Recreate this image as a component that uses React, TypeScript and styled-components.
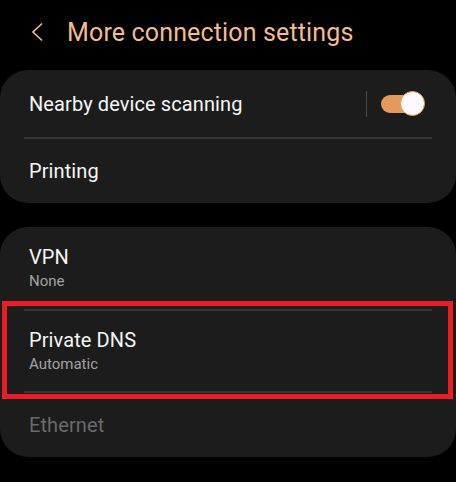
import React from "react";
import styled, { createGlobalStyle } from "styled-components";

const Global = createGlobalStyle`
  html, body { margin: 0; padding: 0; background: #000; }
  body { font-family: Roboto, "Noto Sans", sans-serif; -webkit-font-smoothing: antialiased; }
`;

const Screen = styled.div`
  width: 456px;
  height: 482px;
  background: #000;
  overflow: hidden;
  display: flex;
  flex-direction: column;
`;

const Header = styled.header`
  height: 70px;
  display: flex;
  align-items: center;
  padding-left: 30px;
  box-sizing: border-box;
  padding-bottom: 6px;
`;

const BackButton = styled.span`
  width: 16px;
  height: 20px;
  display: flex;
  margin-right: 21px;
`;

const Title = styled.h1`
  margin: 0;
  font-size: 25px;
  font-weight: 400;
  color: #f3bd8d;
  letter-spacing: 0.15px;
`;

const Card = styled.section`
  position: relative;
  background: #1c1c1c;
  border-radius: 28px;
  display: flex;
  flex-direction: column;
  margin-bottom: 24px;
`;

const Row = styled.div<{ $h: number }>`
  height: ${(p) => p.$h}px;
  display: flex;
  align-items: center;
  padding: 0 31px 0 29px;
`;

const TextCol = styled.div`
  flex: 1;
  display: flex;
  flex-direction: column;
  gap: 3px;
`;

const Label = styled.div<{ $dim?: boolean }>`
  font-size: 20px;
  line-height: 24px;
  letter-spacing: 0.1px;
  color: ${(p) => (p.$dim ? "#6a6a6a" : "#f6f6f6")};
`;

const Sub = styled.div`
  font-size: 15px;
  line-height: 19px;
  color: #a2a2a2;
`;

const Divider = styled.hr`
  margin: 0 24px;
  border: none;
  height: 2px;
  background: #363636;
`;

const VLine = styled.span`
  width: 1px;
  height: 26px;
  background: #4a4a4a;
  margin-right: 14px;
`;

const Switch = styled.span`
  position: relative;
  width: 44px;
  height: 26px;
  display: flex;
  align-items: center;
`;

const Track = styled.span`
  width: 40px;
  height: 18px;
  border-radius: 9px;
  background: #e39a5d;
`;

const Thumb = styled.span`
  position: absolute;
  right: 0;
  top: 0;
  width: 23px;
  height: 23px;
  border-radius: 50%;
  background: #fafafa;
  border: 1.5px solid #e39a5d;
`;

const Highlight = styled.div`
  position: absolute;
  left: 2px;
  top: 74px;
  width: 451px;
  height: 98px;
  box-sizing: border-box;
  border: 5px solid #ea1c26;
  pointer-events: none;
`;

export default function App() {
  return (
    <Screen>
      <Global />
      <Header>
        <BackButton>
          <svg width="16" height="20" viewBox="0 0 16 20">
            <path d="M12 1.5 L3 10 L12 18.5" fill="none" stroke="#f3bd8d" strokeWidth="1.6" strokeLinejoin="miter" />
          </svg>
        </BackButton>
        <Title>More connection settings</Title>
      </Header>

      <Card>
        <Row $h={67}>
          <TextCol>
            <Label>Nearby device scanning</Label>
          </TextCol>
          <VLine />
          <Switch>
            <Track />
            <Thumb />
          </Switch>
        </Row>
        <Divider />
        <Row $h={64}>
          <TextCol>
            <Label>Printing</Label>
          </TextCol>
        </Row>
      </Card>

      <Card>
        <Row $h={82}>
          <TextCol>
            <Label>VPN</Label>
            <Sub>None</Sub>
          </TextCol>
        </Row>
        <Divider />
        <Row $h={80}>
          <TextCol>
            <Label>Private DNS</Label>
            <Sub>Automatic</Sub>
          </TextCol>
        </Row>
        <Divider />
        <Row $h={64}>
          <TextCol>
            <Label $dim>Ethernet</Label>
          </TextCol>
        </Row>
        <Highlight />
      </Card>
    </Screen>
  );
}
